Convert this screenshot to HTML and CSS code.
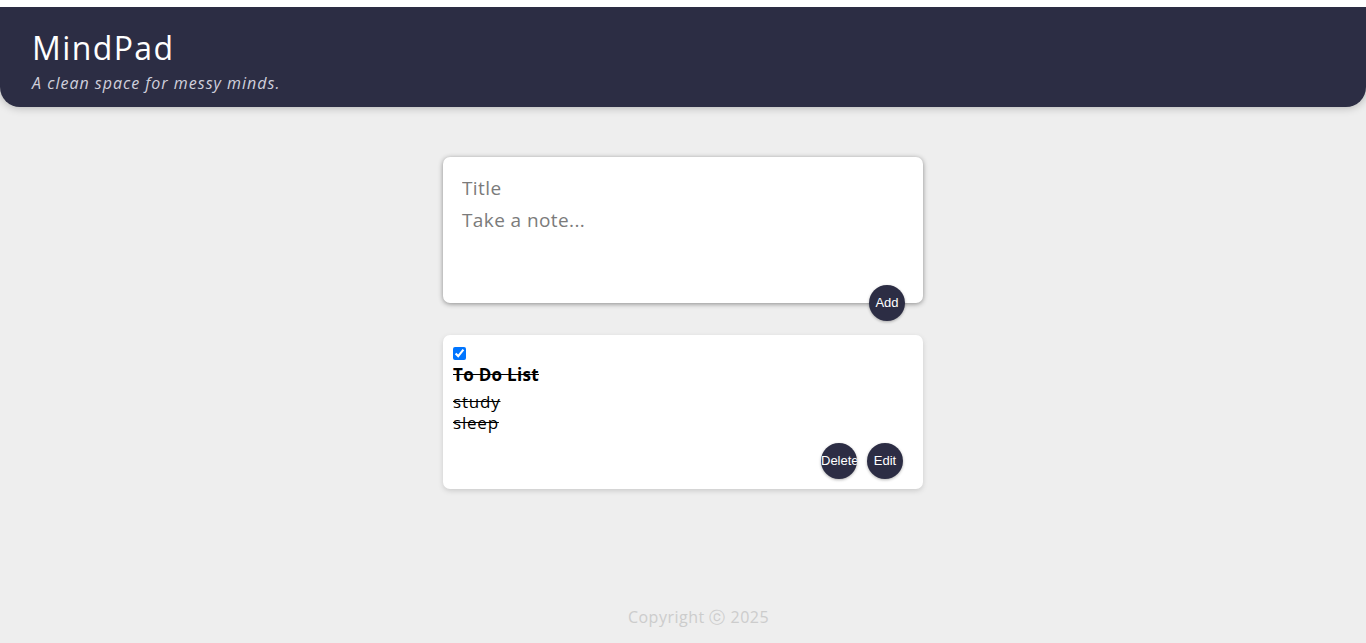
FILE: index.html
```html
<!DOCTYPE html>
<html lang="en">
<head>
<meta charset="utf-8">
<title>MindPad</title>
<link rel="stylesheet" href="styles.css">
</head>
<body>
<div class="page">
  <header class="header">
    <h1 class="brand">MindPad</h1>
    <p class="tagline">A clean space for messy minds.</p>
  </header>
  <main class="main">
    <form class="create-note">
      <input class="title-input" name="title" placeholder="Title">
      <textarea class="body-input" name="content" placeholder="Take a note..." rows="3"></textarea>
      <button type="button" class="round-btn add-btn">Add</button>
    </form>
    <div class="note">
      <input type="checkbox" class="note-check" checked>
      <h1 class="note-title">To Do List</h1>
      <p class="note-content">study<br>sleep</p>
      <div class="note-actions">
        <button type="button" class="round-btn">Delete</button>
        <button type="button" class="round-btn">Edit</button>
      </div>
    </div>
  </main>
  <footer class="footer">
    <p class="copyright">Copyright ⓒ 2025</p>
  </footer>
</div>
</body>
</html>
```
FILE: styles.css
```css
html {
  background: #fff;
}
* {
  box-sizing: border-box;
}
body {
  margin: 7px 0 0;
  background: #eeeeee;
  font-family: "Open Sans", "DejaVu Sans", sans-serif;
}
.page {
  min-height: calc(100vh - 7px);
  display: flex;
  flex-direction: column;
}
.header {
  background: #2c2d44;
  border-radius: 0 0 20px 20px;
  box-shadow: 0 0 10px rgba(0, 0, 0, 0.3);
  padding: 22px 32px 0;
  height: 100px;
}
.brand {
  margin: 0;
  color: #fff;
  font-size: 32px;
  font-weight: 500;
  line-height: 38px;
  letter-spacing: 1.4px;
}
.tagline {
  margin: 6px 0 0;
  color: #d0d0dc;
  font-size: 16px;
  font-style: italic;
  line-height: 20px;
  letter-spacing: 1px;
}
.main {
  display: flex;
  flex-direction: column;
  align-items: center;
  padding-top: 50px;
}
.create-note {
  position: relative;
  width: 480px;
  height: 146px;
  background: #fff;
  border-radius: 7px;
  box-shadow: 0 1px 5px rgb(138, 138, 138);
  padding: 15px;
  display: flex;
  flex-direction: column;
}
.title-input,
.body-input {
  border: none;
  outline: none;
  padding: 4px;
  font-family: inherit;
  font-size: 19px;
  letter-spacing: 0.4px;
  color: #333;
  background: transparent;
  resize: none;
}
.title-input {
  height: 32px;
}
.body-input {
  height: 70px;
  line-height: 24px;
}
.title-input::placeholder,
.body-input::placeholder {
  color: #7b7b7b;
}
.round-btn {
  width: 36px;
  height: 36px;
  border-radius: 50%;
  border: none;
  background: #2c2d44;
  color: #fff;
  font-family: "Liberation Sans", Arial, sans-serif;
  font-size: 13px;
  line-height: 36px;
  text-align: center;
  padding: 0;
  box-shadow: 0 1px 3px rgba(0, 0, 0, 0.3);
  cursor: pointer;
  overflow: hidden;
  white-space: nowrap;
}
.add-btn {
  position: absolute;
  right: 18px;
  bottom: -18px;
}
.note {
  width: 480px;
  margin-top: 32px;
  background: #fff;
  border-radius: 7px;
  box-shadow: 0 2px 5px #ccc;
  padding: 10px 20px 10px 10px;
}
.note-check {
  display: block;
  margin: 2px 0 0;
  width: 13px;
  height: 13px;
}
.note-title {
  margin: 4px 0 5px;
  font-size: 17px;
  font-weight: 700;
  line-height: 22px;
  letter-spacing: 0.3px;
  text-decoration: line-through;
  color: #000;
}
.note-content {
  margin: 0;
  font-size: 17px;
  line-height: 21px;
  letter-spacing: 0.8px;
  text-decoration: line-through;
  color: #000;
}
.note-actions {
  display: flex;
  justify-content: flex-end;
  gap: 10px;
  margin-top: 10px;
}
.footer {
  margin-top: auto;
  display: flex;
  justify-content: center;
  height: 36px;
  padding-left: 31px;
}
.copyright {
  margin: 0;
  color: #cccccc;
  font-size: 16px;
  line-height: 20px;
  letter-spacing: 0.5px;
}
```
